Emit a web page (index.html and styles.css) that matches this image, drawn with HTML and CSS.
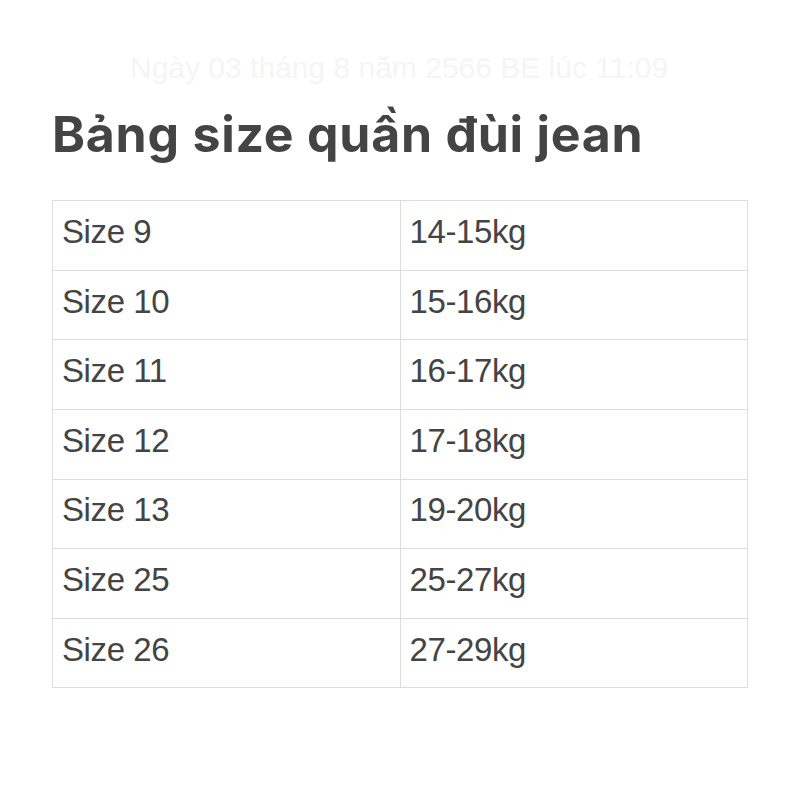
FILE: index.html
```html
<!DOCTYPE html>
<html lang="vi">
<head>
<meta charset="utf-8">
<link rel="stylesheet" href="styles.css">
</head>
<body>
<div class="page">
  <div class="stamp">Ngày 03 tháng 8 năm 2566 BE lúc 11:09</div>
  <h1 class="title">Bảng size quần đùi jean</h1>
  <table class="sizes">
    <tr><td>Size 9</td><td>14-15kg</td></tr>
    <tr><td>Size 10</td><td>15-16kg</td></tr>
    <tr><td>Size 11</td><td>16-17kg</td></tr>
    <tr><td>Size 12</td><td>17-18kg</td></tr>
    <tr><td>Size 13</td><td>19-20kg</td></tr>
    <tr><td>Size 25</td><td>25-27kg</td></tr>
    <tr><td>Size 26</td><td>27-29kg</td></tr>
  </table>
</div>
</body>
</html>
```

FILE: styles.css
```css
html, body {
  margin: 0;
  padding: 0;
  background: #ffffff;
}
.page {
  width: 800px;
  height: 800px;
  overflow: hidden;
  padding: 52.6px 52px 0 52px;
  box-sizing: border-box;
  font-family: "Liberation Sans", Arial, sans-serif;
  color: #444444;
}
.stamp {
  height: 31.4px;
  padding-left: 78px;
  font-size: 30px;
  line-height: 30px;
  color: #f5f5f5;
  white-space: nowrap;
}
.title {
  margin: 19.8px 0 0 0;
  font-family: "Inter", "Liberation Sans", sans-serif;
  font-size: 50px;
  line-height: 60px;
  font-weight: 700;
  letter-spacing: 0.75px;
  color: #444444;
}
.sizes {
  margin-top: 36.5px;
  width: 696px;
  border-collapse: collapse;
  table-layout: fixed;
}
.sizes td {
  border: 1px solid #dcdcdc;
  height: 69.6px;
  padding: 0 0 7px 9px;
  box-sizing: border-box;
  font-size: 33px;
  letter-spacing: -0.4px;
  color: #444444;
  vertical-align: middle;
}
```
